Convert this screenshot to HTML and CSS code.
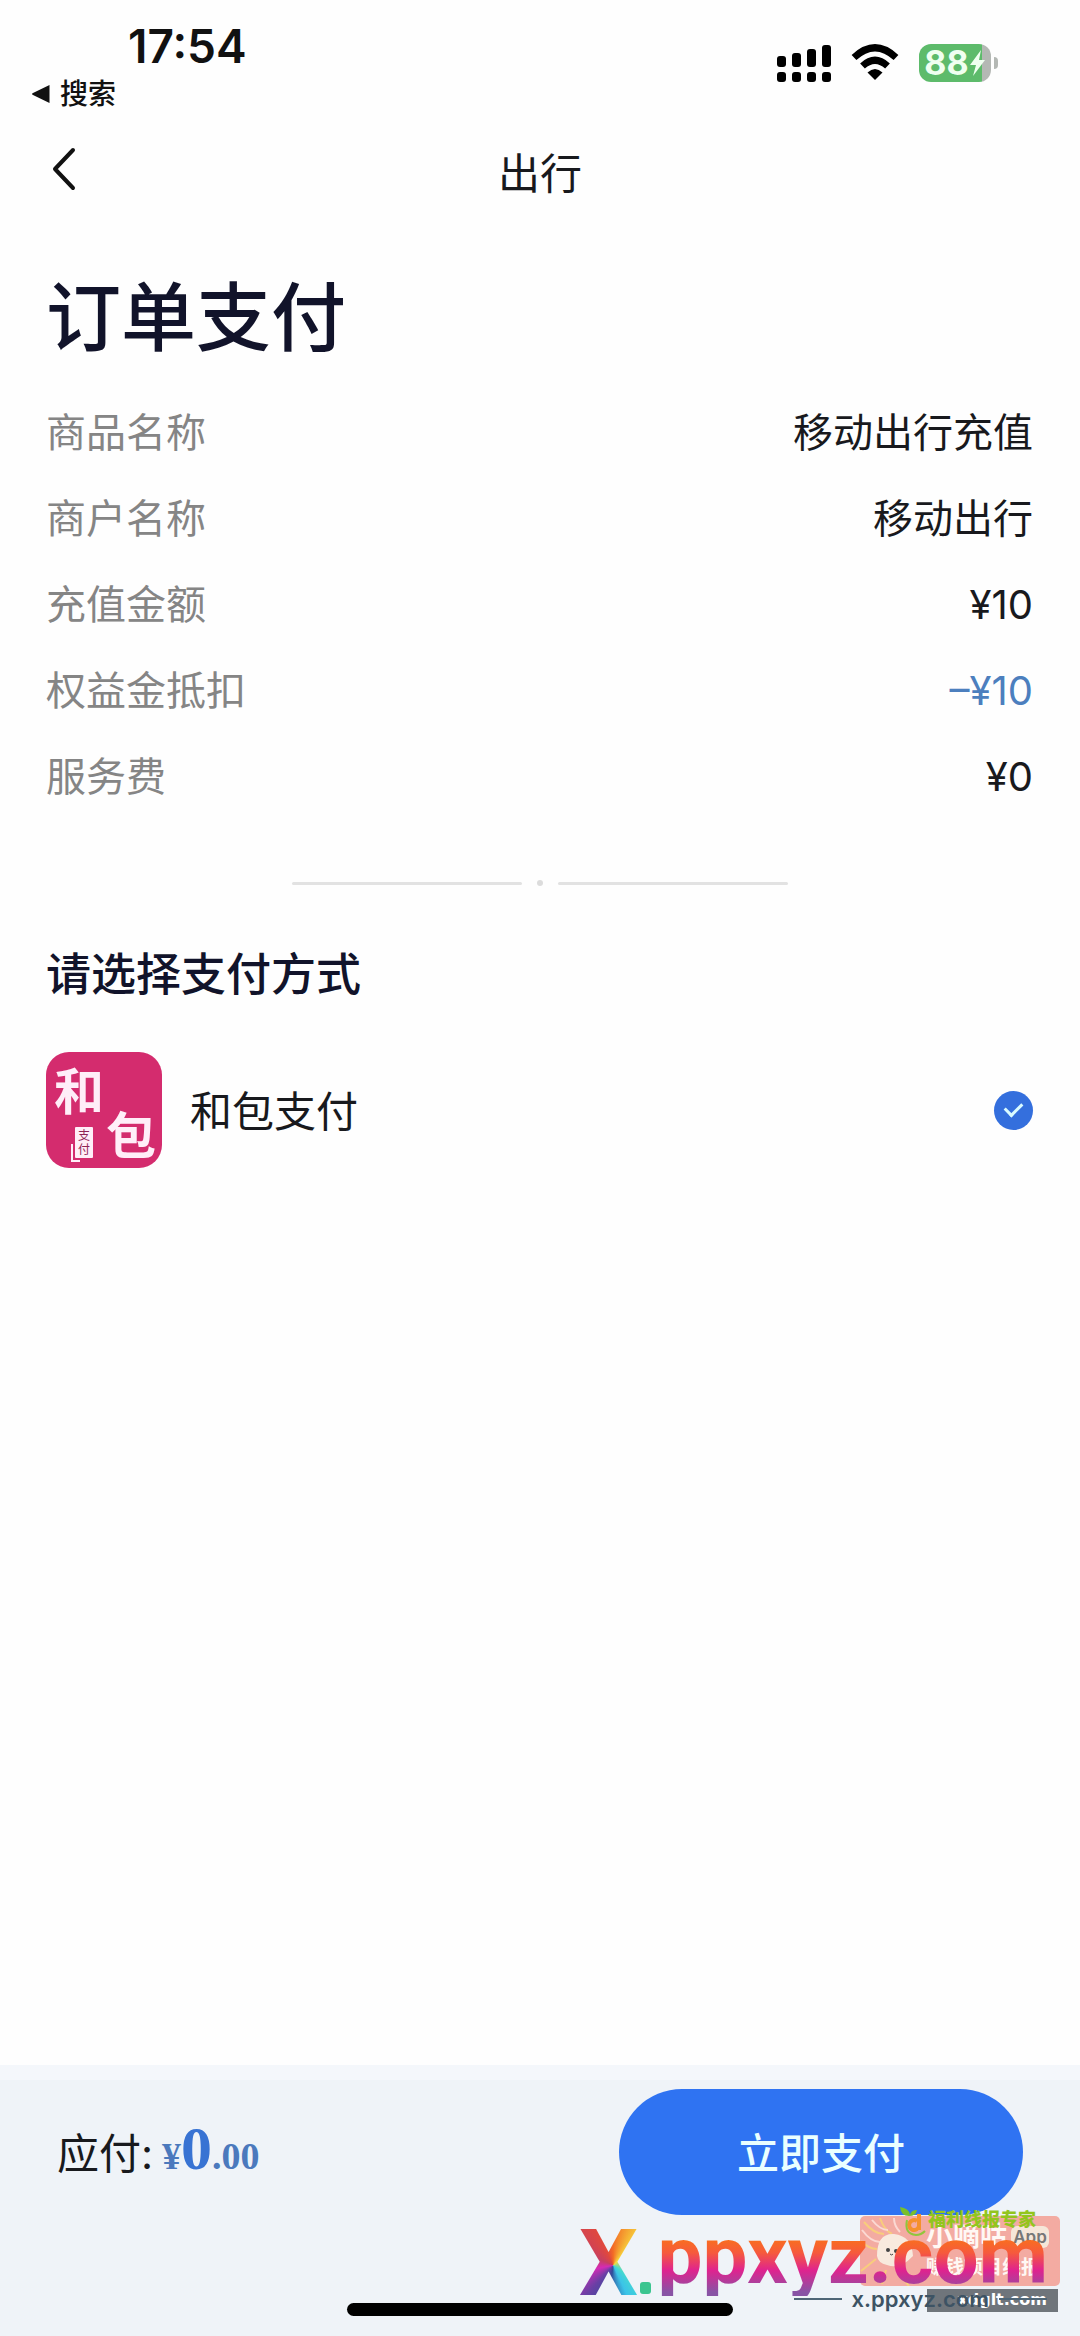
FILE: index.html
```html
<!DOCTYPE html>
<html lang="zh-CN">
<head>
<meta charset="utf-8">
<meta name="viewport" content="width=device-width, initial-scale=1">
<title>订单支付</title>
<link rel="stylesheet" href="styles.css">
</head>
<body>
<header class="status">
  <div class="status-left">
    <time class="clock">17:54</time>
    <a class="return" href="#search">
      <svg width="18" height="18" viewBox="0 0 18 18" aria-hidden="true"><path d="M17.500 0v18L1 10Q-1 9 1 8z" fill="#111"/></svg>
      搜索
    </a>
  </div>
  <div class="status-right">
    <svg width="54" height="38" viewBox="0 0 54 38" aria-label="信号">
      <g fill="#000">
        <rect x="0" y="12" width="9" height="11" rx="3"/><rect x="15" y="9" width="9" height="14" rx="3"/><rect x="30" y="5" width="9" height="18" rx="3"/><rect x="45" y="1" width="9" height="22" rx="3"/>
        <rect x="0" y="28" width="9" height="10" rx="3"/><rect x="15" y="28" width="9" height="10" rx="3"/><rect x="30" y="28" width="9" height="10" rx="3"/><rect x="45" y="28" width="9" height="10" rx="3"/>
      </g>
    </svg>
    <svg class="wifi" width="48" height="36" viewBox="0 0 48 36" aria-label="无线网络">
      <path d="M3 13.500Q24-6 45 13.500M11.500 22Q24 10.500 36.500 22" fill="none" stroke="#000" stroke-width="7"/>
      <path d="M24 36l-7.500-7.500q7.500-7 15 0z" fill="#000"/>
    </svg>
    <div class="battery">
      <span class="battery-level">88</span>
      <svg width="17" height="26" viewBox="0 0 17 26" aria-hidden="true"><path d="M12 0L1 15h6l-3 11L16 10h-6z" fill="#effff0"/></svg>
    </div>
  </div>
</header>

<nav class="nav">
  <button class="back" type="button" aria-label="返回">
    <svg width="24" height="44" viewBox="0 0 24 44"><path d="M21 3L3 22l18 19" fill="none" stroke="#111" stroke-width="4" stroke-linecap="round" stroke-linejoin="round"/></svg>
  </button>
  <span class="nav-title">出行</span>
</nav>

<main class="main">
  <h1 class="title">订单支付</h1>
  <dl class="details">
    <div class="row"><dt>商品名称</dt><dd>移动出行充值</dd></div>
    <div class="row"><dt>商户名称</dt><dd>移动出行</dd></div>
    <div class="row"><dt>充值金额</dt><dd>¥10</dd></div>
    <div class="row"><dt>权益金抵扣</dt><dd class="discount">–¥10</dd></div>
    <div class="row"><dt>服务费</dt><dd>¥0</dd></div>
  </dl>
  <div class="divider"><span class="dot"></span></div>
  <h2 class="subtitle">请选择支付方式</h2>
  <label class="method">
    <svg class="logo" width="116" height="116" viewBox="0 0 116 116" aria-hidden="true">
      <rect width="116" height="116" rx="23" fill="#d42c6e"/>
      <g fill="#ffeef8" class="logo-text">
        <text x="8" y="58" font-size="50">和</text>
        <text x="60" y="102" font-size="50">包</text>
        <rect x="29" y="75" width="18" height="31" rx="1"/>
        <path d="M26 92v17h8" fill="none" stroke="#ffeef8" stroke-width="2"/>
      </g>
      <g fill="#8f2455" class="logo-small"><text x="32" y="88" font-size="12">支</text><text x="32" y="102" font-size="12">付</text></g>
    </svg>
    <span class="method-name">和包支付</span>
    <input class="radio" type="radio" name="method" checked>
  </label>
</main>

<footer class="footer">
  <div class="pay">
    <p class="total">应付: <span class="price">¥<b>0</b>.00</span></p>
    <button class="submit" type="button">立即支付</button>
  </div>
  <div class="home"></div>
  <div class="marks">
    <div class="card">
      <svg class="mascot" width="66" height="70" viewBox="0 0 66 70" aria-hidden="true">
        <path d="M4 6q10 12 20 12M20 2q4 12 12 16M1 25q8 8 16 8M1 55l15-12M22 68l4-14M39 58l10 12" fill="none" stroke="#f8cd7c" stroke-width="2"/>
        <path d="M12 4q8 10 16 10M2 14q9 12 18 12M34 2q0 8 6 14" fill="none" stroke="#fbd9d3" stroke-width="2"/>
        <path d="M17 40Q17 17 34 18Q52 20 53 40Q40 54 27 49Q18 47 17 40z" fill="#f8eade"/>
        <circle cx="28" cy="34" r="2" fill="#444"/><circle cx="36" cy="35" r="2" fill="#444"/><path d="M30 38q2 2 3 0" fill="none" stroke="#444"/>
      </svg>
      <span class="card-name">小嘀咕</span>
      <span class="card-app">App</span>
      <span class="card-note">赚钱项目线报</span>
    </div>
    <div class="expert">
      <svg width="27" height="30" viewBox="0 0 27 30" aria-hidden="true">
        <path d="M9 9Q1 9 0 0Q9 1 10 8Q11 3 17 3Q16 9 9 9z" fill="#79bf2b"/>
        <path d="M19 7v16M19 19a5 5 0 1 1-2-5" fill="none" stroke="#f5912d" stroke-width="4"/>
        <path d="M7 13Q4 27 16 28Q21 28 25 24" fill="none" stroke="#8fc63b" stroke-width="2"/>
      </svg>
      <span>福利线报专家</span>
    </div>
    <span class="domain">xdglt.com</span>
    <span class="brand-x">X</span>
    <span class="brand-dot"></span>
    <span class="brand">ppxyz.com</span>
    <span class="site">x.ppxyz.com</span>
  </div>
</footer>
</body>
</html>
```
FILE: styles.css
```css
* { box-sizing: border-box; margin: 0; padding: 0; }
body {
  min-height: 100vh;
  display: flex;
  flex-direction: column;
  background: #fefefe;
  color: #18191d;
  font-family: Inter, "Noto Sans CJK SC", sans-serif;
  font-size: 40px;
}
svg { display: block; flex: none; }
button { border: 0; background: none; font: inherit; color: inherit; }

.status { height: 120px; display: flex; justify-content: space-between; padding: 18px 89px 0 32px; }
.clock { display: block; margin-left: 96px; font-size: 46px; line-height: 56px; font-weight: 600; color: #111; }
.return { display: flex; align-items: center; gap: 10px; font-size: 28px; line-height: 40px; font-weight: 500; color: #111; text-decoration: none; }
.status-right { display: flex; align-items: flex-start; gap: 20px; padding-top: 26px; }
.battery {
  position: relative; display: flex; align-items: center; justify-content: center;
  width: 72px; height: 38px; border-radius: 12px;
  background: linear-gradient(90deg, #5dbb6b 63px, #b4b8b4 63px);
}
.battery::after { content: ""; position: absolute; left: 75px; top: 13px; width: 4px; height: 12px; border-radius: 0 6px 6px 0; background: #b4b8b4; }
.battery-level { font-size: 34px; line-height: 38px; font-weight: 700; color: #effff0; }

.nav { height: 108px; padding: 0 46px; display: grid; grid-template-columns: 60px 1fr 60px; align-items: center; }
.back { height: 60px; padding: 0 6px; display: flex; align-items: center; margin-bottom: 10px; }
.nav-title { text-align: center; font-size: 42px; line-height: 60px; }

.main { flex: 1; padding: 33px 47px 0 46px; }
.title { font-size: 75px; line-height: 114px; font-weight: 500; color: #11132a; }
.details { display: grid; gap: 26px; margin-top: 28px; }
.row { display: flex; justify-content: space-between; line-height: 60px; }
.row dt { color: #858585; }
.row .discount { color: #4c7fbe; }
.divider { display: grid; grid-template-columns: 230px 6px 230px; gap: 15px; justify-content: center; align-items: center; margin-top: 73px; }
.divider::before, .divider::after { content: ""; height: 3px; background: #e2e2e2; border-radius: 2px; }
.dot { height: 6px; border-radius: 3px; background: #dcdcdc; }
.subtitle { margin-top: 59px; font-size: 45px; line-height: 60px; font-weight: 500; color: #11132a; }
.method { display: flex; align-items: center; margin-top: 47px; font-size: 42px; }
.method-name { flex: 1; margin-left: 28px; padding-bottom: 4px; }
.logo-text, .logo-small { font-family: "Noto Sans CJK SC", sans-serif; font-weight: 700; }
.logo-small { font-weight: 400; }
.radio {
  appearance: none; width: 39px; height: 39px; border-radius: 50%;
  background: #346fdd; display: grid; place-items: center;
}
.radio::after { content: ""; width: 8px; height: 14px; margin-bottom: 5px; border: solid #d9fbff; border-width: 0 3px 3px 0; transform: rotate(45deg); }

.footer { position: relative; height: 271px; background: #eff3f8; border-top: 15px solid #f4f7fb; }
.pay { display: flex; align-items: center; justify-content: space-between; padding: 9px 57px 0; }
.total { font-size: 42px; line-height: 64px; }
.price { margin-left: -3px; font-family: "Liberation Serif", serif; font-weight: 700; font-size: 38px; color: #4b79bd; }
.price b { font-size: 62px; line-height: 64px; color: #3873d3; }
.submit { width: 404px; height: 126px; padding-bottom: 4px; border-radius: 63px; background: #2f73f2; color: #eaffff; font-size: 42px; font-weight: 500; }
.home { position: absolute; left: 50%; bottom: 20px; width: 386px; height: 13px; margin-left: -193px; border-radius: 7px; background: #000; }

/* Channel marks stacked over the bottom right corner of the footer */
.marks > * { position: absolute; line-height: 1; white-space: nowrap; }
.card {
  right: 20px; bottom: 50px; width: 200px; height: 70px; border-radius: 5px;
  background: #f3aba2; color: #fff8f4; overflow: hidden;
}
.card > * { position: absolute; }
.mascot { left: 0; top: 0; }
.card-name { left: 66px; top: 6px; font-size: 27px; line-height: 30px; font-weight: 700; }
.card-app { right: 11px; top: 10px; width: 38px; height: 22px; border-radius: 6px; background: #f5e6d8; color: #777; font-size: 17px; line-height: 22px; font-weight: 600; text-align: center; }
.card-note { left: 66px; top: 41px; font-size: 19px; line-height: 22px; font-weight: 700; }
.expert { right: 44px; bottom: 99px; display: flex; align-items: center; gap: 1px; font-size: 18px; font-weight: 900; color: #93c51e; }
.expert span { margin-bottom: 4px; }
.domain { right: 22px; bottom: 24px; width: 131px; padding: 3px 11px 4px 0; background: #6f757b; color: #fff; font: 700 16px/16px "DejaVu Sans", sans-serif; text-align: right; }
.brand-x, .brand { font-family: Roboto, sans-serif; font-weight: 700; color: transparent; -webkit-background-clip: text; background-clip: text; }
.brand-x {
  right: 442px; bottom: 26px; font-size: 93px;
  background-image: conic-gradient(from 0deg at 58% 52%, #f36b25, #f7dd3e 12%, #45d9d0 35%, #3bc4e8 43%, #304d9b 52%, #6a3fa5 62%, #d42bb5 72%, #c73f60 82%, #e0483e 93%, #f36b25);
}
.brand-dot { right: 429px; bottom: 42px; width: 11px; height: 12px; border-radius: 3px; background: #3bc590; }
.brand {
  right: 32px; bottom: 40px; font-size: 80px; line-height: 80px;
  background-image: linear-gradient(#f9701d 28%, #f65a3c 46%, #df238f 68%, #8853a5 95%);
}
.site { right: 33px; bottom: 24px; display: flex; align-items: center; gap: 10px; font-size: 22px; line-height: 26px; font-weight: 600; color: #3d5364; }
.site::before, .site::after { content: ""; width: 48px; height: 2px; background: #4f6677; }
```
